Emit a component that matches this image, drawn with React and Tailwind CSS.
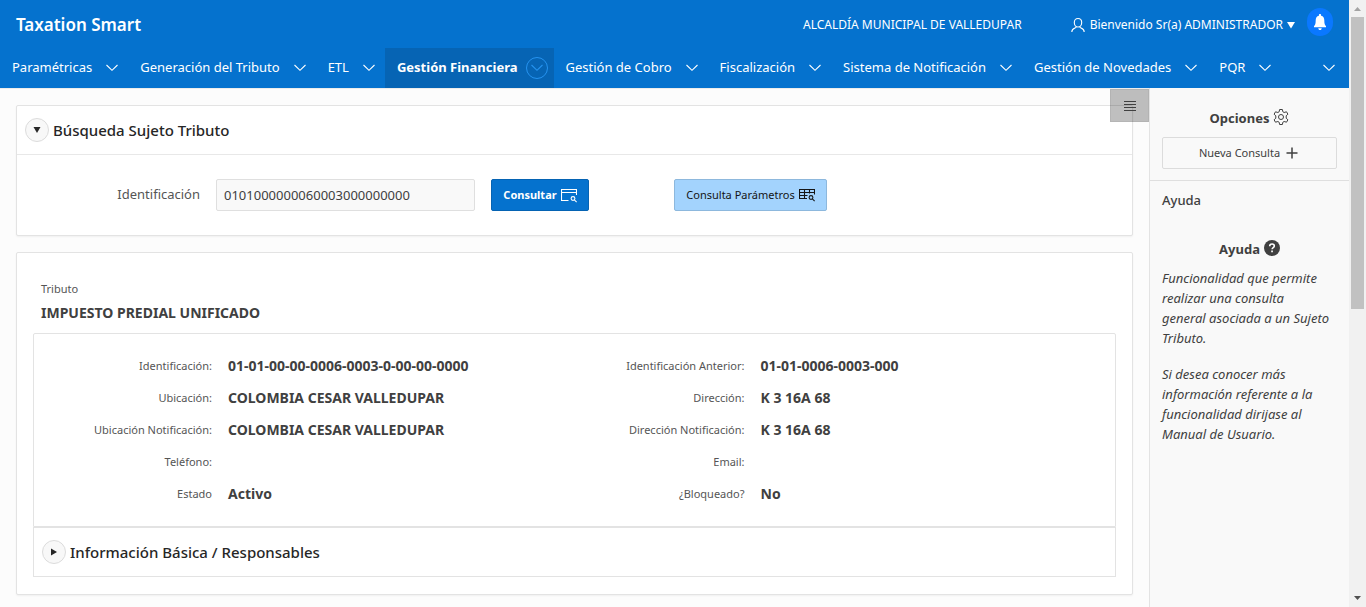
import React from "react";

const NAV = [
  { label: "Paramétricas" },
  { label: "Generación del Tributo" },
  { label: "ETL" },
  { label: "Gestión Financiera", current: true },
  { label: "Gestión de Cobro" },
  { label: "Fiscalización" },
  { label: "Sistema de Notificación" },
  { label: "Gestión de Novedades" },
  { label: "PQR" },
];

const LEFT = [
  ["Identificación:", "01-01-00-00-0006-0003-0-00-00-0000"],
  ["Ubicación:", "COLOMBIA CESAR VALLEDUPAR"],
  ["Ubicación Notificación:", "COLOMBIA CESAR VALLEDUPAR"],
  ["Teléfono:", ""],
  ["Estado", "Activo"],
];

const RIGHT = [
  ["Identificación Anterior:", "01-01-0006-0003-000"],
  ["Dirección:", "K 3 16A 68"],
  ["Dirección Notificación:", "K 3 16A 68"],
  ["Email:", ""],
  ["¿Bloqueado?", "No"],
];

function Chevron() {
  return (
    <svg viewBox="0 0 16 16" className="size-4" fill="none" stroke="currentColor" strokeWidth="1.1" aria-hidden="true">
      <path d="M2.5 5 8 10.3 13.5 5" />
    </svg>
  );
}

function UserIcon() {
  return (
    <svg viewBox="0 0 16 16" className="size-4" fill="none" stroke="currentColor" strokeWidth="1.1" aria-hidden="true">
      <path d="M8 1.500c2.300 0 3.700 1.600 3.700 4S10.200 10 8 10 4.300 7.900 4.300 5.500 5.700 1.500 8 1.500Z" />
      <path d="M6 9.400v.9c-.3.900-4.200.8-4.200 4.700M10 9.400v.9c.3.900 4.200.8 4.200 4.700" />
    </svg>
  );
}

function BellIcon() {
  return (
    <svg viewBox="0 0 16 16" className="size-4" fill="currentColor" aria-hidden="true">
      <path d="M8 0c.7 0 1.100.5 1.100 1.100v.6C11.300 2.200 12.300 4 12.300 6.200c0 3 .4 4.800 1.700 5.800v1.200H2V12c1.300-1 1.700-2.800 1.700-5.800 0-2.200 1-4 3.200-4.500v-.6C6.900.5 7.300 0 8 0Z" />
      <path d="M6.300 14.200h3.400c0 1-.7 1.800-1.700 1.800s-1.700-.8-1.700-1.800Z" />
    </svg>
  );
}

function GearIcon() {
  return (
    <svg viewBox="0 0 16 16" className="size-4" fill="none" stroke="currentColor" strokeWidth="1" strokeLinejoin="round" aria-hidden="true">
      <path d="M6.600.5h2.800l.4 2.200 1.300.8 2.400-.7 1.400 2.400-1.700 1.600v2.400l1.700 1.600-1.400 2.400-2.400-.7-1.300.8-.4 2.200H6.600l-.4-2.200-1.300-.8-2.400.7-1.400-2.400 1.700-1.600V6.800L1.100 5.200l1.400-2.400 2.400.7 1.300-.8Z" />
      <circle cx="8" cy="8" r="2.500" />
    </svg>
  );
}

function WindowSearchIcon() {
  return (
    <svg viewBox="0 0 16 16" className="size-4" fill="none" stroke="currentColor" strokeWidth="1.100" aria-hidden="true">
      <path d="M7.500 13.500H.5v-11h15V8M.5 5.500h15" />
      <circle cx="12" cy="11.500" r="1.900" />
      <path d="m13.400 12.900 2.200 2.200" />
    </svg>
  );
}

function TableSearchIcon() {
  return (
    <svg viewBox="0 0 16 16" className="size-4" fill="none" stroke="currentColor" strokeWidth="1.100" aria-hidden="true">
      <path d="M8 11.500H.5v-9h15v5M.5 5.500h15M.5 8.500h8M5.500 2.500v9M10.500 2.500v4" />
      <circle cx="12" cy="10.500" r="1.900" />
      <path d="m13.400 11.900 2.200 2.200" />
    </svg>
  );
}

function HelpIcon() {
  return (
    <svg viewBox="0 0 16 16" className="size-4" aria-hidden="true">
      <circle cx="8" cy="8" r="8" fill="currentColor" />
      <path d="M5.700 6.200C5.700 4.800 6.700 4 8 4s2.300.8 2.300 2c0 1.600-2.200 1.600-2.200 3.300" fill="none" stroke="#fff" strokeWidth="1.600" />
      <path d="M7.200 10.500h1.700v1.700H7.200z" fill="#fff" />
    </svg>
  );
}

function Disclosure({ title, open }) {
  return (
    <div className="flex h-12 items-center gap-1 px-2">
      <button
        type="button"
        aria-label={title}
        aria-expanded={open}
        className="flex size-6 shrink-0 items-center justify-center rounded-full border border-[#dcdcdc] bg-[#f8f8f8] text-[#262626]"
      >
        <svg viewBox="0 0 8 8" className={open ? "size-2 rotate-90" : "size-2"} fill="currentColor" aria-hidden="true">
          <path d="M1 .5 7 4 1 7.500Z" />
        </svg>
      </button>
      <h2 className="text-[15px] leading-6 font-medium text-[#262626]">{title}</h2>
    </div>
  );
}

function Fields({ rows }) {
  return (
    <dl className="flex-1">
      {rows.map(([label, value]) => (
        <div key={label} className="flex h-8 items-center gap-4">
          <dt className="w-[170px] shrink-0 text-right text-[11px] text-[#555]">{label}</dt>
          <dd className="text-sm font-bold whitespace-nowrap text-[#404040]">{value}</dd>
        </div>
      ))}
    </dl>
  );
}

function Header() {
  return (
    <header className="bg-[#0572ce] text-white">
      <div className="flex h-12 items-center pt-0.5 pr-4 pl-4">
        <a href="#inicio" className="mr-auto text-[17px] leading-6 font-semibold">Taxation Smart</a>
        <a href="#entidad" className="mr-12 text-xs">ALCALDÍA MUNICIPAL DE VALLEDUPAR</a>
        <button type="button" className="mr-3 flex items-center gap-1 text-xs">
          <UserIcon />
          <span>Bienvenido Sr(a) ADMINISTRADOR</span>
          <svg viewBox="0 0 8 8" className="size-2" fill="currentColor" aria-hidden="true">
            <path d="M0 1h8L4 7.500Z" />
          </svg>
        </button>
        <button type="button" aria-label="Notificaciones" className="mb-1.5 flex h-7 w-[26px] items-center justify-center rounded-full bg-[#0a78ff]">
          <BellIcon />
        </button>
      </div>
      <nav className="flex h-10">
        {NAV.map(({ label, current }) => (
          <div key={label} className={current ? "flex items-center gap-2 bg-[#0664b4] pr-1.5 pl-3" : "flex items-center gap-2 pr-1 pl-3"}>
            <a href="#menu" className={current ? "text-[13px] font-bold whitespace-nowrap" : "text-[13px] whitespace-nowrap"}>
              {label}
            </a>
            <button
              type="button"
              aria-label={"Abrir " + label}
              className={
                current
                  ? "flex size-[22px] items-center justify-center rounded-full border border-[#2593f0] text-[#2593f0]"
                  : "flex size-6 items-center justify-center"
              }
            >
              <Chevron />
            </button>
          </div>
        ))}
        <button type="button" aria-label="Más opciones" className="mr-3 ml-auto">
          <Chevron />
        </button>
      </nav>
    </header>
  );
}

function Sidebar() {
  return (
    <aside className="w-[200px] shrink-0 border-l border-[#e3e3e3] bg-[#f9f9f9] text-[#404040]">
      <div className="border-b border-[#dfdfdf] px-3 pt-[21px] pb-[11px]">
        <h3 className="mb-2 flex h-5 items-center justify-center gap-1 text-[13px] font-bold">
          Opciones <span className="mb-1"><GearIcon /></span>
        </h3>
        <button type="button" className="flex h-8 w-full items-center justify-center gap-1 rounded-xs border border-[#dcdcdc] text-[11px]">
          Nueva Consulta
          <svg viewBox="0 0 16 16" className="size-4" fill="none" stroke="currentColor" strokeWidth="1.500" aria-hidden="true">
            <path d="M8 2.500v11M2.500 8h11" />
          </svg>
        </button>
      </div>
      <div className="px-3 pt-[7px]">
        <h3 className="text-[13px] leading-6 font-medium">Ayuda</h3>
        <h4 className="mt-7 mb-2 flex h-5 items-center justify-center gap-1 text-[13px] font-bold">
          Ayuda <span className="mb-1"><HelpIcon /></span>
        </h4>
        <p className="mb-4 text-[13px] leading-5 italic">
          Funcionalidad que permite realizar una consulta
          <br />
          general asociada a un Sujeto Tributo.
        </p>
        <p className="text-[13px] leading-5 italic">
          Si desea conocer más información referente a la funcionalidad dirijase al Manual de Usuario.
        </p>
      </div>
    </aside>
  );
}

function PageScrollbar() {
  return (
    <div className="flex w-[17px] shrink-0 flex-col items-center bg-[#f1f1f1]" aria-hidden="true">
      <svg viewBox="0 0 17 17" className="size-[17px]" fill="#a3a3a3">
        <path d="M5 11h7L8.500 7Z" />
      </svg>
      <div className="h-[292px] w-[13px] bg-[#c1c1c1]" />
      <svg viewBox="0 0 17 17" className="mt-auto size-[17px]" fill="#505050">
        <path d="M5 6h7l-3.500 4Z" />
      </svg>
    </div>
  );
}

export default function App() {
  return (
    <div className="flex min-h-screen bg-[#fcfcfc] font-['Noto_Sans','Open_Sans',sans-serif]">
      <div className="flex min-w-0 flex-1 flex-col">
        <Header />
        <div className="flex flex-1">
          <main className="relative min-w-0 flex-1 border-t border-[#ececec] px-4 pt-4 pb-3">
            <button
              type="button"
              aria-label="Mostrar u ocultar panel"
              className="absolute top-0 right-0 flex h-[33px] w-[39px] items-center justify-center border border-black/5 bg-black/25 text-[#404040]"
            >
              <svg viewBox="0 0 12 12" className="size-3" stroke="currentColor" strokeWidth="1" aria-hidden="true">
                <path d="M0 1.500h12M0 4.500h12M0 7.500h12M0 10.500h12" />
              </svg>
            </button>

            <section className="mb-4 rounded-xs border border-[#e3e3e3] bg-white shadow-xs">
              <Disclosure title="Búsqueda Sujeto Tributo" open />
              <form className="flex items-center border-t border-[#e8e8e8] px-2 py-6">
                <label htmlFor="identificacion" className="mr-4 w-[175px] text-right text-[13px] text-[#555]">
                  Identificación
                </label>
                <input
                  id="identificacion"
                  defaultValue="0101000000060003000000000"
                  className="mr-4 h-8 w-[259px] rounded-xs border border-[#dfdfdf] bg-[#f9f9f9] px-[7px] text-[13px] text-[#404040]"
                />
                <button type="button" className="mr-[85px] flex h-8 w-[98px] items-center justify-center gap-1 rounded-xs border border-[#0563b3] bg-[#0572ce] text-[11px] font-bold text-white">
                  Consultar <WindowSearchIcon />
                </button>
                <button type="button" className="flex h-8 w-[153px] items-center justify-center gap-1 rounded-xs border border-[#8db8dd] bg-[#a3d3fd] text-[11px] whitespace-nowrap text-[#151515]">
                  Consulta Parámetros <TableSearchIcon />
                </button>
              </form>
            </section>

            <section className="rounded-xs border border-[#e3e3e3] bg-white px-4 pt-7 pb-[17px] shadow-xs">
              <div className="mb-[10px] px-2">
                <div className="text-[11px] leading-4 text-[#555]">Tributo</div>
                <div className="mt-[6px] text-sm leading-5 font-bold text-[#404040]">IMPUESTO PREDIAL UNIFICADO</div>
              </div>
              <div className="flex rounded-t-xs border border-[#e3e3e3] px-2 py-4">
                <Fields rows={LEFT} />
                <Fields rows={RIGHT} />
              </div>
              <div className="border border-[#e3e3e3]">
                <Disclosure title="Información Básica / Responsables" open={false} />
              </div>
            </section>
          </main>
          <Sidebar />
        </div>
      </div>
      <PageScrollbar />
    </div>
  );
}
